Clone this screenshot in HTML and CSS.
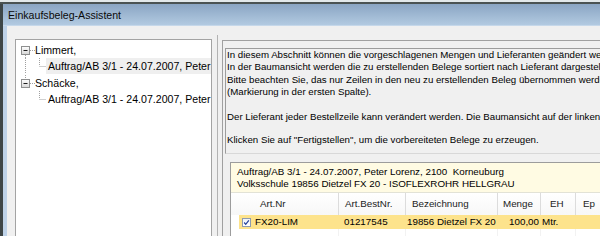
FILE: index.html
```html
<!DOCTYPE html>
<html lang="de">
<head>
<meta charset="utf-8">
<title>Einkaufsbeleg-Assistent</title>
<link rel="stylesheet" href="styles.css">
</head>
<body>
<div class="frame-top"></div>
<div class="window">
  <div class="edge"></div>
  <div class="main">
    <div class="titlebar">Einkaufsbeleg-Assistent</div>
    <div class="body">
      <div class="blue-edge"></div>
      <div class="client">
        <div class="tree">
          <div class="row">
            <svg class="guide g-root" width="19" height="16" viewBox="0 0 19 16">
              <defs><linearGradient id="bx" x1="0" y1="0" x2="0" y2="1"><stop offset="0" stop-color="#ffffff"/><stop offset="1" stop-color="#d6d6d6"/></linearGradient></defs>
              <line x1="9.5" y1="13" x2="9.5" y2="16" class="dot"/>
              <line x1="14" y1="8.5" x2="19" y2="8.5" class="dot"/>
              <rect x="5.5" y="4.5" width="8" height="8" fill="url(#bx)" stroke="#8e8f8f"/>
              <line x1="7.5" y1="8.5" x2="11.5" y2="8.5" stroke="#1e1e1e"/>
            </svg>
            <span class="label">Limmert,</span>
          </div>
          <div class="row">
            <svg class="guide g-child" width="30" height="16" viewBox="0 0 30 16">
              <line x1="9.5" y1="0" x2="9.5" y2="16" class="dot"/>
              <line x1="23.5" y1="0" x2="23.5" y2="8" class="dot"/>
              <line x1="23.5" y1="8.5" x2="30" y2="8.5" class="dot"/>
            </svg>
            <span class="label child hover">Auftrag/AB 3/1 - 24.07.2007, Peter Lorenz, 2100 Korneuburg</span>
          </div>
          <div class="row">
            <svg class="guide g-root" width="19" height="16" viewBox="0 0 19 16">
              <line x1="9.5" y1="0" x2="9.5" y2="4" class="dot"/>
              <line x1="14" y1="8.5" x2="19" y2="8.5" class="dot"/>
              <rect x="5.5" y="4.5" width="8" height="8" fill="url(#bx)" stroke="#8e8f8f"/>
              <line x1="7.5" y1="8.5" x2="11.5" y2="8.5" stroke="#1e1e1e"/>
            </svg>
            <span class="label">Schäcke,</span>
          </div>
          <div class="row">
            <svg class="guide g-child" width="30" height="16" viewBox="0 0 30 16">
              <line x1="23.5" y1="0" x2="23.5" y2="8" class="dot"/>
              <line x1="23.5" y1="8.5" x2="30" y2="8.5" class="dot"/>
            </svg>
            <span class="label child">Auftrag/AB 3/1 - 24.07.2007, Peter Lorenz, 2100 Korneuburg</span>
          </div>
        </div>
        <div class="splitter"></div>
        <div class="right">
          <div class="info">
            <p class="p1">In diesem Abschnitt können die vorgeschlagenen Mengen und Lieferanten geändert werden.<br>In der Baumansicht werden die zu erstellenden Belege sortiert nach Lieferant dargestellt.<br>Bitte beachten Sie, das nur Zeilen in den neu zu erstellenden Beleg übernommen werden, die markiert sind<br>(Markierung in der ersten Spalte).</p>
            <p class="p2">Der Lieferant jeder Bestellzeile kann verändert werden. Die Baumansicht auf der linken Seite wird dann aktualisiert.</p>
            <p class="p3">Klicken Sie auf "Fertigstellen", um die vorbereiteten Belege zu erzeugen.</p>
          </div>
          <div class="grid">
            <div class="grid-caption">
              <div>Auftrag/AB 3/1 - 24.07.2007, Peter Lorenz, 2100&nbsp; Korneuburg</div>
              <div>Volksschule 19856 Dietzel FX 20 - ISOFLEXROHR HELLGRAU</div>
            </div>
            <div class="grid-row head">
              <div class="c ind"></div>
              <div class="c c-art">Art.Nr</div>
              <div class="c">Art.BestNr.</div>
              <div class="c">Bezeichnung</div>
              <div class="c c-menge">Menge</div>
              <div class="c c-eh">EH</div>
              <div class="c c-ep">Ep</div>
            </div>
            <div class="grid-row data">
              <div class="c ind"></div>
              <div class="c c-art"><span class="check"><svg width="9" height="9" viewBox="0 0 9 9"><path d="M1.5 4.5 L3.5 6.8 L7.5 1.8" fill="none" stroke="#23409a" stroke-width="1.6"/></svg></span>FX20-LIM</div>
              <div class="c">01217545</div>
              <div class="c c-bez">19856 Dietzel FX 20 - ISOFLEXROHR HELLGRAU</div>
              <div class="c num">100,00</div>
              <div class="c c-mtr">Mtr.</div>
              <div class="c"></div>
            </div>
            <div class="grid-row empty">
              <div class="c ind"></div>
              <div class="c"></div>
              <div class="c"></div>
              <div class="c"></div>
              <div class="c"></div>
              <div class="c"></div>
              <div class="c"></div>
            </div>
          </div>
        </div>
      </div>
    </div>
  </div>
</div>
</body>
</html>
```

FILE: styles.css
```css
* { box-sizing: border-box; }
html, body { margin: 0; padding: 0; }
body {
  width: 600px;
  height: 236px;
  overflow: hidden;
  background: #f0f0f0;
  font-family: "Liberation Sans", Arial, sans-serif;
  color: #000;
}
.frame-top {
  height: 4px;
  background: linear-gradient(#e2e8ea 0, #e2e8ea 2px, #4a5353 2px, #4a5353 4px);
}
.window { display: flex; height: 232px; }
.edge { width: 3px; flex: none; background: #3e4647; }
.main { flex: 1; min-width: 0; display: flex; flex-direction: column; }
.titlebar {
  height: 22px;
  flex: none;
  background: linear-gradient(#8aa5c3, #b2cae1);
  border-bottom: 1px solid #c6d8ea;
  padding-left: 5px;
  font-size: 10.6px;
  line-height: 23px;
  color: #0a0a0a;
}
.body { flex: 1; min-height: 0; display: flex; }
.blue-edge { width: 4px; flex: none; background: #bed2e8; }
.client {
  flex: 1;
  min-width: 0;
  display: flex;
  align-items: flex-start;
  padding-top: 13px;
  overflow: hidden;
}

/* tree */
.tree {
  flex: none;
  width: 197px;
  height: 230px;
  margin-left: 8px;
  background: #fff;
  border: 1px solid #a3a3a3;
  padding-top: 2px;
  overflow: hidden;
  font-size: 10.6px;
}
.row {
  display: flex;
  align-items: center;
  height: 16.3px;
  white-space: nowrap;
}
.guide { flex: none; display: block; }
.dot { stroke: #a0a0a0; stroke-dasharray: 1 1; }
.label { line-height: 16px; }
.label.child { padding-left: 2px; flex: 1; }
.label.hover { background: #efefef; }

.splitter {
  flex: none;
  width: 1px;
  height: 300px;
  margin-left: 5px;
  margin-top: -4px;
  background: #b2b2b2;
}

/* right panel */
.right {
  flex: 1;
  min-width: 0;
  height: 300px;
  margin-left: 4px;
  margin-top: 1px;
  border-left: 1px solid #a0a0a0;
  border-top: 1px solid #a0a0a0;
  padding: 7px 0 0 2px;
  overflow: hidden;
}
.info {
  width: 420px;
  height: 106px;
  border-left: 1px solid #9c9c9c;
  border-top: 1px solid #9c9c9c;
  border-bottom: 1px solid #d8d8d8;
  padding-left: 1px;
  font-size: 9.7px;
  line-height: 12.4px;
  white-space: nowrap;
  overflow: hidden;
}
.info p { margin: 0; }
.info .p2 { margin-top: 12.6px; }
.info .p3 { margin-top: 10.5px; }

.grid {
  width: 420px;
  margin: 8px 0 0 5px;
  border-left: 1px solid #9c9c9c;
  border-top: 1px solid #9c9c9c;
  background: #fff;
  font-size: 9.8px;
}
.grid-caption {
  height: 30px;
  background: #fffbe3;
  border-bottom: 1px solid #e2e2d6;
  padding: 3px 0 0 6px;
  line-height: 11.5px;
  white-space: nowrap;
}
.grid-row {
  display: grid;
  grid-template-columns: 8px 99px 67px 92px 43px 35px 76px;
}
.grid-row .c {
  white-space: nowrap;
  overflow: hidden;
}
.head {
  height: 22px;
  line-height: 22px;
  color: #222;
  background: linear-gradient(#ffffff, #f7f7f7);
}
.head .c { padding-left: 6px; border-left: 1px solid #dcdcdc; }
.head .c.ind { border-left: none; padding: 0; }
.head .c.c-art { border-left: none; padding-left: 21px; }
.head .c.c-menge { padding-left: 5px; }
.head .c.c-eh { padding-left: 9px; }
.head .c.c-ep { padding-left: 7px; }

.data {
  height: 14px;
  line-height: 14px;
  background: #fde38c;
}
.data .c.ind { background: #fff; }
.data .c { padding-left: 6px; }
.data .c.c-art { display: flex; align-items: center; padding-left: 3px; }
.data .c.c-bez { padding-left: 2px; }
.data .c.num { text-align: right; padding: 0 1px 0 0; }
.data .c.c-mtr { padding-left: 2px; }
.check {
  width: 9px;
  height: 9px;
  margin-right: 4px;
  border: 1px solid #8e9bb0;
  background: linear-gradient(#eef2f8, #ffffff);
  display: flex;
  align-items: center;
  justify-content: center;
  flex: none;
}
.check svg { display: block; width: 7px; height: 7px; }
.empty { height: 20px; }
.empty .c { border-left: 1px solid #f2f2f2; }
.empty .c.ind, .empty .c:nth-child(2) { border-left: none; }
```
